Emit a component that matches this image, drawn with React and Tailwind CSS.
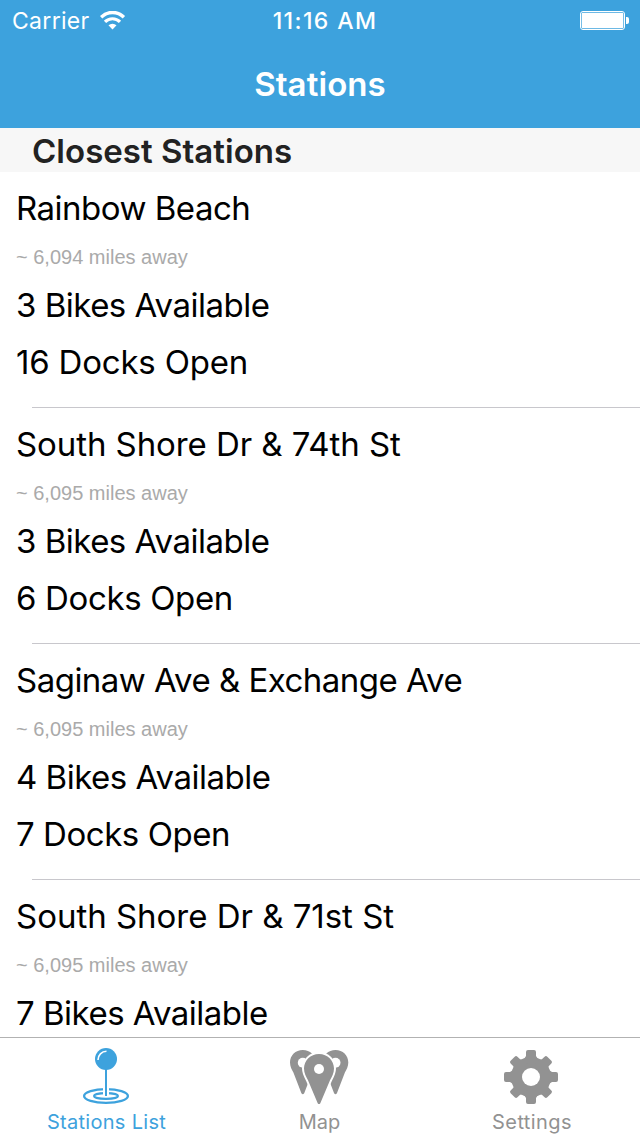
const stations = [
  { name: "Rainbow Beach", miles: "6,094", bikes: 3, docks: 16, nameTracking: "tracking-[-0.5px]", docksTracking: "tracking-[-0.2px]" },
  { name: "South Shore Dr & 74th St", miles: "6,095", bikes: 3, docks: 6, nameTracking: "tracking-[-0.08px]", docksTracking: "tracking-[-0.35px]" },
  { name: "Saginaw Ave & Exchange Ave", miles: "6,095", bikes: 4, docks: 7, nameTracking: "tracking-[-0.52px]", docksTracking: "tracking-[-0.45px]" },
  { name: "South Shore Dr & 71st St", miles: "6,095", bikes: 7, docks: null, nameTracking: "tracking-[-0.02px]", docksTracking: "tracking-[-0.45px]" },
];

function WifiIcon() {
  return (
    <svg width="26" height="20" viewBox="0.500 1 26 20" fill="none" stroke="white">
      <path d="M1.6 7.200a16 16 0 0 1 22.8 0" strokeWidth="3.400" />
      <path d="M5.5 11.900a10.5 10.5 0 0 1 15 0" strokeWidth="3.200" />
      <path d="M13 19.500l-4-4.2a6 6 0 0 1 8 0z" fill="white" stroke="none" />
    </svg>
  );
}

function BatteryIcon() {
  return (
    <svg width="50" height="20" viewBox="0 0 50 20">
      <rect x="0.5" y="0.5" width="44" height="18" rx="2.5" fill="none" stroke="white" />
      <rect x="1.7" y="1.7" width="41.6" height="15.6" rx="1.2" fill="white" />
      <path d="M46 6h1a2 2 0 0 1 2 2v3a2 2 0 0 1-2 2h-1z" fill="white" />
    </svg>
  );
}

function StationsIcon() {
  return (
    <svg width="60" height="60" viewBox="76 1046 60 60">
      <ellipse cx="106" cy="1096" rx="21.900" ry="6.900" fill="none" stroke="#3da2dd" strokeWidth="2.3" />
      <ellipse cx="106" cy="1096" rx="11.900" ry="2.900" fill="none" stroke="#3da2dd" strokeWidth="2.3" />
      <path d="M103 1087h6v9h-6z" fill="white" />
      <path d="M105 1068h2v28h-2z" fill="#3da2dd" />
      <circle cx="106" cy="1059" r="11" fill="#3da2dd" />
      <path d="M98 1060a8.5 8.500 0 0 1 8.500-8.7" fill="none" stroke="white" strokeWidth="1.6" />
    </svg>
  );
}

function MapIcon() {
  const side = "M0-12.8c-7.3 0-12.8 5.5-12.8 12.4 0 4 1.8 7 3.4 10.2L-1.4 30.4q1.4 2 2.8 0L9.4 9.8C11 6.6 12.8 3.6 12.8-.4 12.8-7.3 7.3-12.8 0-12.8z";
  const front = "M0-15c-8.6 0-15 6.6-15 14.6 0 4.6 2 8 4 11.6L-1.3 34.2q1.3 1.8 2.6 0L11 11.2C13 7.600 15 4.200 15-.4 15-8.400 8.600-15 0-15z";
  return (
    <svg width="60" height="60" viewBox="289 1046 60 60">
      <g transform="translate(302.800 1062.800)">
        <path d={side} fill="#929292" />
        <circle r="5" fill="white" />
      </g>
      <g transform="translate(335.500 1062.800)">
        <path d={side} fill="#929292" />
        <circle r="5" fill="white" />
      </g>
      <g transform="translate(319 1069)">
        <path d={front} fill="#929292" stroke="white" strokeWidth="4" paintOrder="stroke" />
        <circle r="5" fill="white" />
      </g>
    </svg>
  );
}

function GearIcon() {
  return (
    <svg width="60" height="60" viewBox="-30 -31 60 60">
      <g fill="#929292">
        <circle r="20" />
        {[0, 45, 90, 135].map((angle) => (
          <path
            key={angle}
            transform={angle % 90 ? `rotate(${angle}) scale(0.96)` : `rotate(${angle})`}
            d="M-5-25a2 2 0 0 1 2-2h6a2 2 0 0 1 2 2v4l2 3v36l-2 3v4a2 2 0 0 1-2 2h-6a2 2 0 0 1-2-2v-4l-2-3v-36l2-3z"
          />
        ))}
      </g>
      <circle r="9" fill="white" />
    </svg>
  );
}

function StationRow({ station }) {
  return (
    <li className="h-[236px] shrink-0 pl-4 text-[33px] leading-[57px] text-black">
      <div className="flex h-[235px] flex-col pt-2 whitespace-nowrap">
        <div className={`h-[57px] ${station.nameTracking}`}>{station.name}</div>
        <div className="h-10 font-['Liberation_Sans',sans-serif] text-[20px] leading-10 text-[#aaaaaa]">
          ~ {station.miles} miles away
        </div>
        <div className="h-[57px] tracking-[-0.5px]">{station.bikes} Bikes Available</div>
        {station.docks !== null && (
          <div className={`h-[57px] ${station.docksTracking}`}>{station.docks} Docks Open</div>
        )}
      </div>
      <div className="ml-4 h-px bg-[#c8c7cc]" />
    </li>
  );
}

export default function App() {
  return (
    <div className="flex h-[1136px] w-[640px] flex-col overflow-hidden bg-white font-['Inter',sans-serif]">
      <header className="h-32 shrink-0 bg-[#3da2dd] text-white">
        <div className="grid h-[42px] grid-cols-3 items-center pr-[10px] pl-3 text-[23px]">
          <div className="flex items-center gap-2.5">
            <span className="tracking-[0.3px]">Carrier</span>
            <WifiIcon />
          </div>
          <div className="pl-2 text-center font-medium tracking-[1.4px] whitespace-nowrap">11:16 AM</div>
          <div className="flex justify-end"><BatteryIcon /></div>
        </div>
        <h1 className="flex h-[86px] items-center justify-center text-[33px] font-semibold tracking-[0.1px]">Stations</h1>
      </header>
      <h2 className="flex h-11 shrink-0 items-center bg-[#f7f7f7] pt-1 pl-8 text-[33px] font-semibold tracking-[0.03px] text-[#222222]">Closest Stations</h2>
      <ul className="min-h-0 flex-1 overflow-hidden">
        {stations.map((station) => <StationRow key={station.name} station={station} />)}
      </ul>
      <nav className="grid h-[99px] shrink-0 grid-cols-[212px_214px_210px] border-t border-[#b2b2b2] bg-white pt-2 text-[20px] leading-8 text-[#929292]">
        <div className="flex flex-col items-center tracking-[0.3px] text-[#3da2dd]"><StationsIcon /><span className="pl-px">Stations List</span></div>
        <div className="flex flex-col items-center"><MapIcon /><span className="pl-px">Map</span></div>
        <div className="flex flex-col items-center tracking-[0.4px]"><GearIcon /><span className="pl-0.5">Settings</span></div>
      </nav>
    </div>
  );
}
